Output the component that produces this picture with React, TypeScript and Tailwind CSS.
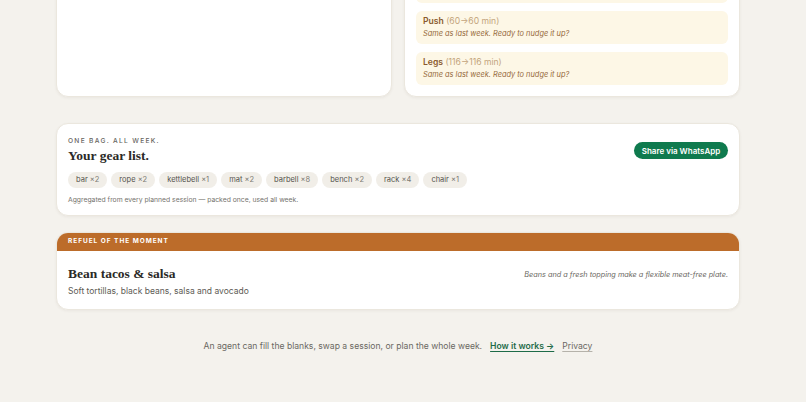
import React from 'react';

const gear = [
  ['bar', 2],
  ['rope', 2],
  ['kettlebell', 1],
  ['mat', 2],
  ['barbell', 8],
  ['bench', 2],
  ['rack', 4],
  ['chair', 1],
];

const progress = [
  { name: 'Push', from: 60, to: 60 },
  { name: 'Legs', from: 116, to: 116 },
];

const card = 'rounded-xl bg-white border border-[#ebe7de] shadow-[0_1px_3px_rgba(60,50,30,0.06)]';

const App: React.FC = () => {
  return (
    <div className="min-h-screen bg-[#f4f2ed] overflow-hidden font-['Inter','Liberation_Sans',sans-serif] text-[#2a2a2a]">
      <div className="ml-[56px] w-[684px] pb-10">
        {/* Top cards (scrolled past) */}
        <div className="grid grid-cols-2 gap-3 -mt-[43px]">
          <div className={card} />
          <div className={`${card} px-[11px] pt-3 pb-[11px] flex flex-col gap-2`}>
            {/* previous session, scrolled out of view */}
            <div className="h-[33px] rounded-md bg-[#fdf7e6]" />
            {progress.map(p => (
              <div key={p.name} className="h-[33px] rounded-md bg-[#fdf7e6] px-[7px] pt-[4px]">
                <p className="text-[8.6px] leading-[13px] text-[#8a5a2c]">
                  <span className="font-semibold">{p.name}</span>{' '}
                  <span className="text-[#c3a47c]">({p.from}→{p.to} min)</span>
                </p>
                <p className="text-[7.4px] leading-[12px] italic text-[#96693b]">Same as last week. Ready to nudge it up?</p>
              </div>
            ))}
          </div>
        </div>

        {/* Gear list */}
        <div className={`mt-[26px] ${card} px-[11px] pt-3 pb-[10px]`}>
          <div className="flex justify-between items-start">
            <div>
              <p className="text-[6.6px] leading-[10px] tracking-[0.2em] text-[#66645e] font-medium">ONE BAG. ALL WEEK.</p>
              <h2 className="mt-px text-[13.5px] leading-[18px] font-semibold font-['Liberation_Serif',serif] text-[#2b2a27]">Your gear list.</h2>
            </div>
            <button className="mt-[6px] h-[17px] w-[94px] rounded-full bg-[#0f7a4e] text-white text-[8px] font-semibold">Share via WhatsApp</button>
          </div>
          <div className="mt-[7px] flex gap-1">
            {gear.map(([n, c]) => (
              <span key={n} className="h-[16px] px-2 rounded-full bg-[#f1eee8] text-[7.5px] leading-[16px] text-[#55534d]">
                {n} <span className="text-[#7d7a73]">×{c}</span>
              </span>
            ))}
          </div>
          <p className="mt-[7px] text-[6.8px] leading-[10px] text-[#75736d]">Aggregated from every planned session — packed once, used all week.</p>
        </div>

        {/* Refuel */}
        <div className={`mt-4 ${card} overflow-hidden`}>
          <div className="h-[18px] bg-[#bc6c2a] px-[11px] flex items-center">
            <p className="text-[6.5px] font-bold tracking-[0.15em] text-white">REFUEL OF THE MOMENT</p>
          </div>
          <div className="px-[11px] pt-[14px] pb-[12px] flex justify-between items-start">
            <div>
              <h3 className="text-[13.5px] leading-[18px] font-semibold font-['Liberation_Serif',serif] text-[#2b2a27]">Bean tacos &amp; salsa</h3>
              <p className="mt-[2px] text-[8.5px] leading-[12px] text-[#5d5b55]">Soft tortillas, black beans, salsa and avocado</p>
            </div>
            <p className="mt-[4px] text-[7.3px] leading-[12px] italic text-[#6a6862]">Beans and a fresh topping make a flexible meat-free plate.</p>
          </div>
        </div>

        {/* Footer */}
        <div className="mt-[30px] flex justify-center items-center gap-2 text-[8.6px] leading-[12px]">
          <span className="text-[#6a6862]">An agent can fill the blanks, swap a session, or plan the whole week.</span>
          <a className="font-semibold text-[#1d6b48] underline underline-offset-2 decoration-[#1d6b48]">How it works →</a>
          <a className="text-[#6a6862] underline underline-offset-2 decoration-[#b5b2aa]">Privacy</a>
        </div>
      </div>
    </div>
  );
};

export default App;
